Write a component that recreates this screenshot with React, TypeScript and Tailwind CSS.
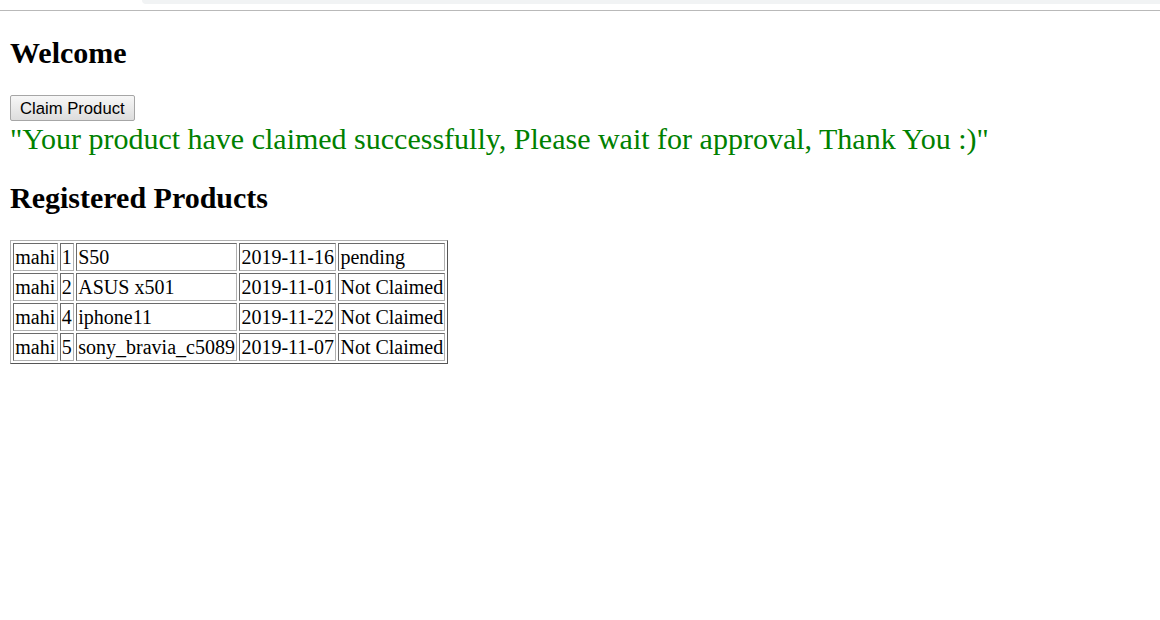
const rows = [
  { user: "mahi", id: 1, name: "S50", date: "2019-11-16", status: "pending" },
  { user: "mahi", id: 2, name: "ASUS x501", date: "2019-11-01", status: "Not Claimed" },
  { user: "mahi", id: 4, name: "iphone11", date: "2019-11-22", status: "Not Claimed" },
  { user: "mahi", id: 5, name: "sony_bravia_c5089", date: "2019-11-07", status: "Not Claimed" },
];

const TD =
  "border border-t-[#6b6b6b] border-l-[#6b6b6b] border-r-[#b0b0b0] border-b-[#b0b0b0] px-[1.25px] py-[1.5px] leading-[23px] whitespace-nowrap";

export default function App() {
  return (
    <div className="min-h-screen bg-white text-black font-['Liberation_Serif',serif]">
      {/* browser chrome sliver */}
      <div className="flex h-[11px] border-b border-[#b9b9b9] bg-white pl-[142px]">
        <div className="h-[4px] flex-1 rounded-bl-[10px] bg-[#f1f3f4]" />
      </div>

      <div className="px-[10px] pt-[24px]">
        <h2 className="mb-[25px] text-[30px] font-bold leading-[35px]">Welcome</h2>

        <button className="h-[26px] rounded-[2px] border border-[#a6a6a6] bg-gradient-to-b from-[#f7f7f7] to-[#dddddd] px-[9px] pt-[2px] font-['Liberation_Sans',Arial,sans-serif] text-[16.67px] leading-[20px] text-black">
          Claim Product
        </button>
        <div className="pt-[1px] text-[30px] leading-[34.5px] text-[#008000]">
          "Your product have claimed successfully, Please wait for approval, Thank You :)"
        </div>

        <h2 className="mt-[24px] mb-[25px] text-[30px] font-bold leading-[34.5px]">
          Registered Products
        </h2>

        <table className="border-separate border-spacing-x-[2.5px] border-spacing-y-[2px] border border-t-[#b0b0b0] border-l-[#b0b0b0] border-r-[#555555] border-b-[#555555] text-[20px]">
          <tbody>
            {rows.map((r) => (
              <tr key={r.id}>
                <td className={TD}>{r.user}</td>
                <td className={TD}>{r.id}</td>
                <td className={TD}>{r.name}</td>
                <td className={TD}>{r.date}</td>
                <td className={TD}>{r.status}</td>
              </tr>
            ))}
          </tbody>
        </table>
      </div>
    </div>
  );
}
